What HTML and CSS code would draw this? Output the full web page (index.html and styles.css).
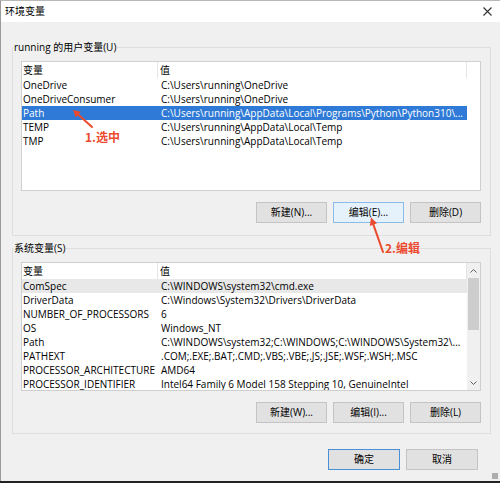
FILE: index.html
```html
<!DOCTYPE html>
<html lang="zh-CN">
<head>
<meta charset="utf-8">
<title>环境变量</title>
<link rel="stylesheet" href="styles.css">
</head>
<body>
<div class="window">
  <div class="titlebar">
    <span class="title">环境变量</span>
    <svg class="close" width="9" height="9" viewBox="0 0 9 9"><path d="M0.5 0.5 L8.5 8.5 M8.5 0.5 L0.5 8.5" stroke="#333" stroke-width="1.1" fill="none"/></svg>
  </div>
  <div class="content">
    <fieldset class="group group-user">
      <legend>running 的用户变量(U)</legend>
      <div class="list list-user">
        <div class="list-main">
          <div class="row head"><div class="c1">变量</div><div class="c2">值</div></div>
          <div class="row"><div class="c1">OneDrive</div><div class="c2">C:\Users\running\OneDrive</div></div>
          <div class="row"><div class="c1">OneDriveConsumer</div><div class="c2">C:\Users\running\OneDrive</div></div>
          <div class="row selected"><div class="c1">Path</div><div class="c2">C:\Users\running\AppData\Local\Programs\Python\Python310\...</div></div>
          <div class="row"><div class="c1">TEMP</div><div class="c2">C:\Users\running\AppData\Local\Temp</div></div>
          <div class="row"><div class="c1">TMP</div><div class="c2">C:\Users\running\AppData\Local\Temp</div></div>
        </div>
        <div class="list-side"></div>
      </div>
      <div class="buttons">
        <button class="btn">新建(N)...</button>
        <button class="btn btn-hover">编辑(E)...</button>
        <button class="btn">删除(D)</button>
      </div>
    </fieldset>

    <fieldset class="group group-sys">
      <legend>系统变量(S)</legend>
      <div class="list list-sys">
        <div class="list-main">
          <div class="row head"><div class="c1">变量</div><div class="c2">值</div></div>
          <div class="row hover"><div class="c1">ComSpec</div><div class="c2">C:\WINDOWS\system32\cmd.exe</div></div>
          <div class="row"><div class="c1">DriverData</div><div class="c2">C:\Windows\System32\Drivers\DriverData</div></div>
          <div class="row"><div class="c1">NUMBER_OF_PROCESSORS</div><div class="c2">6</div></div>
          <div class="row"><div class="c1">OS</div><div class="c2">Windows_NT</div></div>
          <div class="row"><div class="c1">Path</div><div class="c2">C:\WINDOWS\system32;C:\WINDOWS;C:\WINDOWS\System32\...</div></div>
          <div class="row"><div class="c1">PATHEXT</div><div class="c2">.COM;.EXE;.BAT;.CMD;.VBS;.VBE;.JS;.JSE;.WSF;.WSH;.MSC</div></div>
          <div class="row"><div class="c1">PROCESSOR_ARCHITECTURE</div><div class="c2">AMD64</div></div>
          <div class="row"><div class="c1">PROCESSOR_IDENTIFIER</div><div class="c2">Intel64 Family 6 Model 158 Stepping 10, GenuineIntel</div></div>
        </div>
        <div class="scrollbar">
          <div class="sb-arrow"><svg width="7" height="4" viewBox="0 0 7 4"><path d="M0.5 3.5 L3.5 0.5 L6.5 3.5" stroke="#606060" fill="none"/></svg></div>
          <div class="sb-track"><div class="sb-thumb"></div></div>
          <div class="sb-arrow"><svg width="7" height="4" viewBox="0 0 7 4"><path d="M0.5 0.5 L3.5 3.5 L6.5 0.5" stroke="#606060" fill="none"/></svg></div>
        </div>
      </div>
      <div class="buttons">
        <button class="btn">新建(W)...</button>
        <button class="btn">编辑(I)...</button>
        <button class="btn">删除(L)</button>
      </div>
    </fieldset>

    <div class="footer">
      <button class="btn btn-default">确定</button>
      <button class="btn">取消</button>
    </div>
  </div>

  <svg class="annot" width="500" height="483" viewBox="0 0 500 483">
    <g stroke="#ec4a2f" stroke-width="2" fill="none" stroke-linecap="round">
      <path d="M92 127 L78.2 114.6"/>
      <path d="M383 252 L373.4 224.6"/>
    </g>
    <g fill="#ec4a2f">
      <path d="M73 110 L80.8 111.8 L75.7 117.4 Z"/>
      <path d="M371 217.5 L377 223.3 L369.8 226 Z"/>
    </g>
  </svg>
  <div class="note note1">1.选中</div>
  <div class="note note2">2.编辑</div>
  <div class="grip"></div>
</div>
</body>
</html>
```

FILE: styles.css
```css
* { box-sizing: border-box; }
html, body { margin: 0; padding: 0; }
body {
  width: 500px;
  height: 483px;
  background: #222;
  font-family: "Open Sans", "Noto Sans CJK SC", sans-serif;
  font-size: 10px;
  color: #000;
  overflow: hidden;
}
.window {
  position: relative;
  width: 500px;
  height: 481px;
  background: #f0f0f0;
  border-left: 1px solid #9a9a9a;
  border-top: 1px solid #b8b8b8;
  display: flex;
  flex-direction: column;
}
.titlebar {
  height: 21px;
  background: #fff;
  display: flex;
  align-items: center;
  justify-content: space-between;
  padding: 0 8px 1px 4px;
}
.title { font-size: 10px; line-height: 14px; }
.close { display: block; margin-top: 1px; }

.content { display: flex; flex-direction: column; }

.group {
  margin: 0 0 0 11px;
  width: 479px;
  min-width: 0;
  border: 1px solid #dedede;
  padding: 7px 9px 12px 8px;
}
.group-user { margin-top: 18px; }
.group-sys { margin-top: 5px; padding-bottom: 10px; }
.group legend {
  padding: 0 1px;
  margin-left: -8px;
  line-height: 14px;
  font-size: 10px;
}

.list {
  display: flex;
  width: 460px;
  background: #fff;
  border: 1px solid #cfcfcf;
  overflow: hidden;
}
.list-user { height: 130px; }
.list-sys { height: 129px; }
.list-main { width: 445px; flex: none; }
.list-side { flex: 1; }

.row {
  display: flex;
  height: 14px;
  line-height: 14px;
  white-space: nowrap;
}
.row.head { height: 16px; line-height: 16px; }
.c1 { width: 136px; flex: none; padding-left: 1px; overflow: hidden; }
.c2 { width: 309px; flex: none; padding-left: 3px; overflow: hidden; }
.row.head .c1 { border-right: 1px solid #e5e5e5; }
.row.head .c2 { border-right: 1px solid #e5e5e5; padding-left: 2px; }
.row.selected { background: #2f7ad6; color: #fff; }
.row.hover { background: #e8e8e8; }

.scrollbar {
  width: 13px;
  flex: none;
  display: flex;
  flex-direction: column;
  background: #f0f0f0;
}
.sb-arrow {
  height: 15px;
  flex: none;
  display: flex;
  align-items: center;
  justify-content: center;
}
.sb-arrow svg { display: block; }
.sb-track { flex: 1; padding: 0 1px; }
.sb-thumb { height: 52px; background: #cdcdcd; }

.buttons {
  display: flex;
  justify-content: flex-end;
  gap: 6px;
  margin-top: 11px;
}
.btn {
  width: 71px;
  height: 21px;
  padding: 0;
  margin: 0;
  font-family: "Open Sans", "Noto Sans CJK SC", sans-serif;
  font-size: 10px;
  line-height: 19px;
  color: #000;
  background: #e1e1e1;
  border: 1px solid #c4c4c4;
  border-radius: 0;
}
.btn-hover { background: #e5f1fb; border-color: #8bbbe8; }
.btn-default { border-color: #4a90d9; }

.footer {
  display: flex;
  justify-content: flex-end;
  gap: 6px;
  margin-top: 15px;
  padding-right: 22px;
}
.footer .btn { width: 72px; }

.annot { position: absolute; left: -1px; top: -1px; pointer-events: none; }
.note {
  position: absolute;
  font-family: "Noto Sans CJK SC", sans-serif;
  font-weight: bold;
  font-size: 12px;
  line-height: 16px;
  color: #ec4a2f;
}
.note1 { left: 84px; top: 128px; }
.note2 { left: 384px; top: 239px; }
.grip {
  position: absolute;
  right: 2px;
  bottom: 2px;
  width: 6px;
  height: 6px;
  background: radial-gradient(circle, #a8a8a8 0.7px, transparent 0.8px) 0 0 / 2px 2px;
}
```
